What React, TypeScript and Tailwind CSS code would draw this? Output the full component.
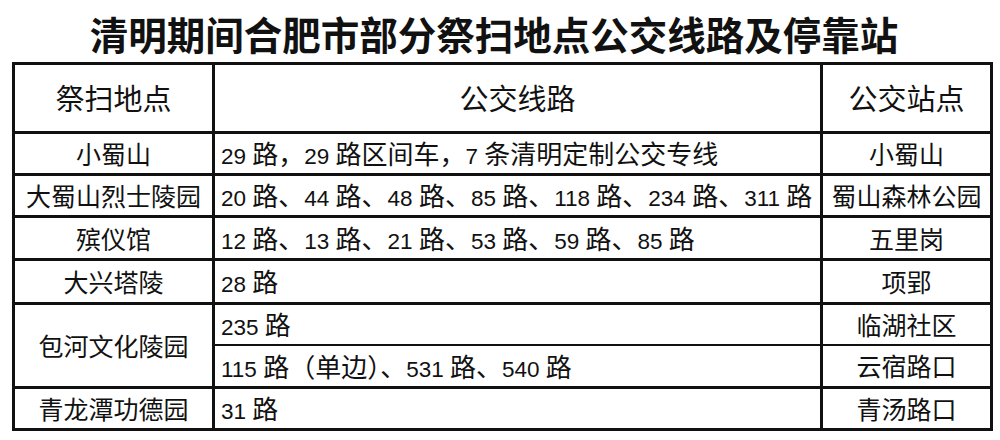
import React from "react";

function T({ s }: { s: string }) {
  const parts = s.split(/([0-9]+ ?)/).filter((p) => p.length > 0);
  return (
    <>
      {parts.map((p, i) =>
        /^[0-9]/.test(p) ? (
          <span key={i} className="text-[22.5px]">
            {p}
          </span>
        ) : (
          <span key={i}>{p}</span>
        )
      )}
    </>
  );
}

const cell = "border-[3px] border-[#111] p-0 pt-[4px] align-middle";
const mid = `${cell} pl-[6px] text-[26px] whitespace-nowrap`;

export default function App() {
  return (
    <div className="w-[1000px] h-[440px] bg-white text-[#111] font-['Liberation_Sans','Noto_Sans_CJK_SC',sans-serif] overflow-hidden">
      <div className="h-[62px] flex items-end justify-center pr-[12px] pb-[6px]">
        <h1 className="text-[38.5px] font-bold leading-none">
          清明期间合肥市部分祭扫地点公交线路及停靠站
        </h1>
      </div>
      <table className="ml-[12px] w-[978px] border-collapse table-fixed text-[25px] leading-none">
        <colgroup>
          <col className="w-[200px]" />
          <col className="w-[608px]" />
          <col className="w-[170px]" />
        </colgroup>
        <tbody>
          <tr>
            <td className={`${cell} h-[69px] text-center text-[29px]`}>祭扫地点</td>
            <td className={`${cell} text-center text-[29px]`}>公交线路</td>
            <td className={`${cell} text-center text-[29px]`}>公交站点</td>
          </tr>
          <tr>
            <td className={`${cell} h-[42px] text-center`}>小蜀山</td>
            <td className={mid}>
              <T s="29 路，29 路区间车，7 条清明定制公交专线" />
            </td>
            <td className={`${cell} text-center`}>小蜀山</td>
          </tr>
          <tr>
            <td className={`${cell} h-[42px] text-center`}>大蜀山烈士陵园</td>
            <td className={mid}>
              <T s="20 路、44 路、48 路、85 路、118 路、234 路、311 路" />
            </td>
            <td className={`${cell} text-center whitespace-nowrap`}>蜀山森林公园</td>
          </tr>
          <tr>
            <td className={`${cell} h-[43px] text-center`}>殡仪馆</td>
            <td className={mid}>
              <T s="12 路、13 路、21 路、53 路、59 路、85 路" />
            </td>
            <td className={`${cell} text-center`}>五里岗</td>
          </tr>
          <tr>
            <td className={`${cell} h-[44px] text-center`}>大兴塔陵</td>
            <td className={mid}>
              <T s="28 路" />
            </td>
            <td className={`${cell} text-center`}>项郢</td>
          </tr>
          <tr>
            <td rowSpan={2} className={`${cell} text-center`}>包河文化陵园</td>
            <td className={`${mid} h-[41px] border-b-2`}>
              <T s="235 路" />
            </td>
            <td className={`${cell} text-center border-b-2`}>临湖社区</td>
          </tr>
          <tr>
            <td className={`${mid} h-[43px] border-t-2`}>
              <T s="115 路（单边）、531 路、540 路" />
            </td>
            <td className={`${cell} text-center border-t-2`}>云宿路口</td>
          </tr>
          <tr>
            <td className={`${cell} h-[42px] text-center`}>青龙潭功德园</td>
            <td className={mid}>
              <T s="31 路" />
            </td>
            <td className={`${cell} text-center`}>青汤路口</td>
          </tr>
        </tbody>
      </table>
    </div>
  );
}
